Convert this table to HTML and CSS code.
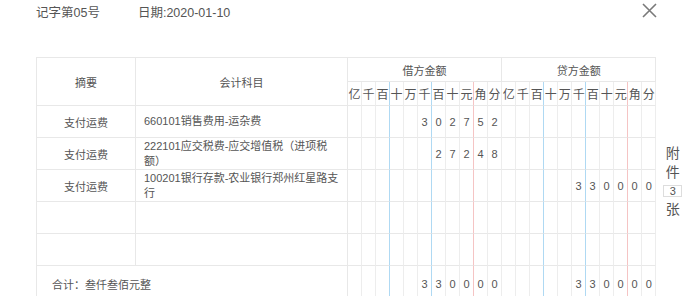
FILE: index.html
```html
<!DOCTYPE html>
<html lang="zh-CN">
<head>
<meta charset="utf-8">
<title>记账凭证</title>
<link rel="stylesheet" href="styles.css">
</head>
<body>
<div class="topbar">
  <span class="word">记字第05号</span>
  <span class="date">日期:2020-01-10</span>
  <button class="close" aria-label="关闭">
    <svg width="15" height="15" viewBox="0 0 15 15"><path d="M1 1 L14 14 M14 1 L1 14" stroke="#7a7a7a" stroke-width="1.6" fill="none"/></svg>
  </button>
</div>
<div class="main">
  <table class="voucher">
    <colgroup>
      <col class="w-sum"><col class="w-acct"><col span="22" class="w-d">
    </colgroup>
    <thead>
      <tr class="h1">
        <th rowspan="2">摘要</th>
        <th rowspan="2">会计科目</th>
        <th colspan="11">借方金额</th>
        <th colspan="11">贷方金额</th>
      </tr>
      <tr class="h2">
        <th class="lb">亿</th><th class="lb">千</th><th class="lb b">百</th><th class="lb">十</th><th class="lb">万</th><th class="lb b">千</th><th class="lb">百</th><th class="lb">十</th><th class="lb r">元</th><th class="lb">角</th><th class="lb">分</th>
        <th class="lb">亿</th><th class="lb">千</th><th class="lb b">百</th><th class="lb">十</th><th class="lb">万</th><th class="lb b">千</th><th class="lb">百</th><th class="lb">十</th><th class="lb r">元</th><th class="lb">角</th><th class="lb">分</th>
      </tr>
    </thead>
    <tbody>
      <tr class="row">
        <td class="sum">支付运费</td>
        <td class="acct">660101销售费用-运杂费</td>
        <td class="d"></td><td class="d"></td><td class="d b"></td><td class="d"></td><td class="d"></td><td class="d b">3</td><td class="d">0</td><td class="d">2</td><td class="d r">7</td><td class="d">5</td><td class="d">2</td>
        <td class="d"></td><td class="d"></td><td class="d b"></td><td class="d"></td><td class="d"></td><td class="d b"></td><td class="d"></td><td class="d"></td><td class="d r"></td><td class="d"></td><td class="d"></td>
      </tr>
      <tr class="row">
        <td class="sum">支付运费</td>
        <td class="acct">222101应交税费-应交增值税（进项税额）</td>
        <td class="d"></td><td class="d"></td><td class="d b"></td><td class="d"></td><td class="d"></td><td class="d b"></td><td class="d">2</td><td class="d">7</td><td class="d r">2</td><td class="d">4</td><td class="d">8</td>
        <td class="d"></td><td class="d"></td><td class="d b"></td><td class="d"></td><td class="d"></td><td class="d b"></td><td class="d"></td><td class="d"></td><td class="d r"></td><td class="d"></td><td class="d"></td>
      </tr>
      <tr class="row">
        <td class="sum">支付运费</td>
        <td class="acct">100201银行存款-农业银行郑州红星路支行</td>
        <td class="d"></td><td class="d"></td><td class="d b"></td><td class="d"></td><td class="d"></td><td class="d b"></td><td class="d"></td><td class="d"></td><td class="d r"></td><td class="d"></td><td class="d"></td>
        <td class="d"></td><td class="d"></td><td class="d b"></td><td class="d"></td><td class="d"></td><td class="d b">3</td><td class="d">3</td><td class="d">0</td><td class="d r">0</td><td class="d">0</td><td class="d">0</td>
      </tr>
      <tr class="row">
        <td class="sum"></td>
        <td class="acct"></td>
        <td class="d"></td><td class="d"></td><td class="d b"></td><td class="d"></td><td class="d"></td><td class="d b"></td><td class="d"></td><td class="d"></td><td class="d r"></td><td class="d"></td><td class="d"></td>
        <td class="d"></td><td class="d"></td><td class="d b"></td><td class="d"></td><td class="d"></td><td class="d b"></td><td class="d"></td><td class="d"></td><td class="d r"></td><td class="d"></td><td class="d"></td>
      </tr>
      <tr class="row">
        <td class="sum"></td>
        <td class="acct"></td>
        <td class="d"></td><td class="d"></td><td class="d b"></td><td class="d"></td><td class="d"></td><td class="d b"></td><td class="d"></td><td class="d"></td><td class="d r"></td><td class="d"></td><td class="d"></td>
        <td class="d"></td><td class="d"></td><td class="d b"></td><td class="d"></td><td class="d"></td><td class="d b"></td><td class="d"></td><td class="d"></td><td class="d r"></td><td class="d"></td><td class="d"></td>
      </tr>
    </tbody>
    <tfoot>
      <tr class="total">
        <td class="total-label" colspan="2">合计：叁仟叁佰元整</td>
        <td class="d"></td><td class="d"></td><td class="d b"></td><td class="d"></td><td class="d"></td><td class="d b">3</td><td class="d">3</td><td class="d">0</td><td class="d r">0</td><td class="d">0</td><td class="d">0</td>
        <td class="d"></td><td class="d"></td><td class="d b"></td><td class="d"></td><td class="d"></td><td class="d b">3</td><td class="d">3</td><td class="d">0</td><td class="d r">0</td><td class="d">0</td><td class="d">0</td>
      </tr>
    </tfoot>
  </table>
  <div class="attach">
    <div class="attach-char">附</div>
    <div class="attach-char">件</div>
    <div class="attach-count">3</div>
    <div class="attach-char">张</div>
  </div>
</div>
</body>
</html>
```
FILE: styles.css
```css
html, body {
  margin: 0;
  padding: 0;
  background: #ffffff;
}
body {
  font-family: "Liberation Sans", "Noto Sans CJK SC", sans-serif;
  color: #555555;
}
.topbar {
  display: flex;
  align-items: flex-start;
  height: 26px;
  padding: 0 36px;
}
.word, .date {
  font-size: 12.5px;
  line-height: 26px;
  color: #555555;
}
.date {
  margin-left: 38px;
}
.close {
  margin-left: auto;
  margin-top: 3px;
  width: 15px;
  height: 15px;
  padding: 0;
  border: 0;
  background: none;
  display: block;
}
.close svg {
  display: block;
}
.main {
  display: flex;
  align-items: flex-start;
  margin-top: 31px;
  padding-left: 36px;
}
.voucher {
  border-collapse: separate;
  border-spacing: 0;
  table-layout: fixed;
  width: 620px;
  border-top: 1px solid #e8e8e8;
  border-left: 1px solid #e8e8e8;
  flex: none;
}
.w-sum { width: 99px; }
.w-acct { width: 212px; }
.w-d { width: 14px; }
.voucher th,
.voucher td {
  border-right: 1px solid #e8e8e8;
  border-bottom: 1px solid #e8e8e8;
  padding: 0;
  font-weight: normal;
  font-size: 11px;
  color: #555555;
  text-align: center;
  vertical-align: middle;
}
.voucher .b { border-right-color: #afd9f3; }
.voucher .r { border-right-color: #f5c4c4; }
.voucher .d { border-right-color: #ededed; }
.voucher .d.b { border-right-color: #afd9f3; }
.voucher .d.r { border-right-color: #f5c4c4; }
.h1 { height: 24px; }
.h2 { height: 24px; }
.voucher th.lb {
  font-size: 12px;
  border-right-color: #ededed;
}
.voucher th.lb.b { border-right-color: #afd9f3; }
.voucher th.lb.r { border-right-color: #f5c4c4; }
.row { height: 32px; }
.voucher td.acct {
  text-align: left;
  padding: 0 4px 0 8px;
  line-height: 15px;
}
.total { height: 36px; }
.voucher td.total-label {
  text-align: left;
  padding-left: 15px;
  font-size: 11px;
}
.attach {
  width: 33px;
  padding-top: 87px;
  text-align: center;
  font-size: 14px;
  line-height: 19px;
  color: #555555;
  flex: none;
}
.attach-count {
  width: 17px;
  height: 10px;
  margin: 3px auto 3px;
  border: 1px solid #dddddd;
  font-size: 11px;
  line-height: 10px;
  color: #555555;
}
```
